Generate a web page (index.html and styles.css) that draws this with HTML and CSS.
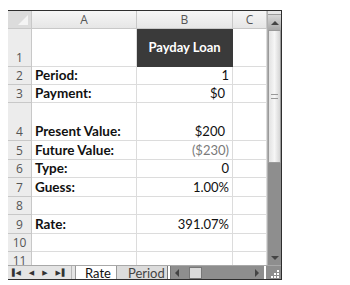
FILE: index.html
```html
<!DOCTYPE html>
<html>

<head>
    <title>Payday Loan - Rate</title>

    <link rel="stylesheet" href="styles.css">
</head>

<body>

    <div class="sheet">

        <div class="sheet-body">

            <div class="grid">
                <div class="hd corner"><span class="corner-tri"></span></div>
                <div class="hd col">A</div>
                <div class="hd col">B</div>
                <div class="hd col">C</div>

                <div class="hd row">1</div>
                <div class="cell"></div>
                <div class="cell title">Payday Loan</div>
                <div class="cell"></div>

                <div class="hd row">2</div>
                <div class="cell label">Period:</div>
                <div class="cell num">1</div>
                <div class="cell"></div>

                <div class="hd row">3</div>
                <div class="cell label">Payment:</div>
                <div class="cell num acct">$0</div>
                <div class="cell"></div>

                <div class="hd row">4</div>
                <div class="cell label">Present Value:</div>
                <div class="cell num acct">$200</div>
                <div class="cell"></div>

                <div class="hd row">5</div>
                <div class="cell label">Future Value:</div>
                <div class="cell num neg">($230)</div>
                <div class="cell"></div>

                <div class="hd row">6</div>
                <div class="cell label">Type:</div>
                <div class="cell num">0</div>
                <div class="cell"></div>

                <div class="hd row">7</div>
                <div class="cell label">Guess:</div>
                <div class="cell num">1.00%</div>
                <div class="cell"></div>

                <div class="hd row">8</div>
                <div class="cell"></div>
                <div class="cell"></div>
                <div class="cell"></div>

                <div class="hd row">9</div>
                <div class="cell label">Rate:</div>
                <div class="cell num">391.07%</div>
                <div class="cell"></div>

                <div class="hd row">10</div>
                <div class="cell"></div>
                <div class="cell"></div>
                <div class="cell"></div>

                <div class="hd row">11</div>
                <div class="cell"></div>
                <div class="cell"></div>
                <div class="cell"></div>
            </div>

            <div class="vscroll">
                <div class="vs-stub"></div>
                <div class="vs-btn"><span class="tri-up"></span></div>
                <div class="vs-thumb"><span class="grip"></span></div>
                <div class="vs-track"></div>
                <div class="vs-btn dark"><span class="tri-down"></span></div>
            </div>

        </div>

        <div class="tabbar">
            <div class="tab-nav">
                <span class="nav-btn">&#9612;&#9664;</span>
                <span class="nav-btn">&#9664;</span>
                <span class="nav-btn">&#9654;</span>
                <span class="nav-btn">&#9654;&#9616;</span>
            </div>
            <div class="tab active">Rate</div>
            <div class="tab">Period</div>
            <div class="splitter"></div>
            <div class="hscroll">
                <span class="tri-left"></span>
                <span class="hs-thumb"></span>
                <span class="hs-track"></span>
                <span class="tri-right"></span>
            </div>
            <div class="splitter light"></div>
            <div class="resize-grip">
                <svg width="14" height="14" viewBox="0 0 14 14">
                    <rect x="10" y="4" width="2" height="2" fill="#fff"/>
                    <rect x="7" y="7" width="2" height="2" fill="#fff"/>
                    <rect x="10" y="7" width="2" height="2" fill="#fff"/>
                    <rect x="4" y="10" width="2" height="2" fill="#fff"/>
                    <rect x="7" y="10" width="2" height="2" fill="#fff"/>
                    <rect x="10" y="10" width="2" height="2" fill="#fff"/>
                </svg>
            </div>
        </div>

    </div>

</body>

</html>
```

FILE: styles.css
```css
* {
    margin: 0;
    padding: 0;
    box-sizing: border-box;
}

body {
    background: #fff;
    font-family: Lato, "Open Sans", sans-serif;
    font-size: 13.5px;
    color: #111;
}

.sheet {
    width: 274px;
    margin: 10px 0 0 8px;
    border-top: 1px solid #2e2e2e;
    border-right: 1px solid #2e2e2e;
    border-bottom: 1px solid #2e2e2e;
}

.sheet-body {
    display: flex;
    height: 254px;
    overflow: hidden;
}

.grid {
    display: grid;
    grid-template-columns: 24px 105px 96px 34px;
    grid-template-rows: 18px 38px 18px 18px 38px 19px 18px 19px 18px 19px 18px 18px;
    width: 259px;
    overflow: hidden;
}

.hd {
    background: linear-gradient(#f6f6f6, #e6e6e6);
    color: #555;
    border-right: 1px solid #c8c8c8;
    border-bottom: 1px solid #c8c8c8;
    font-family: "Open Sans", sans-serif;
    font-size: 12px;
}

.hd.col {
    display: flex;
    align-items: center;
    justify-content: center;
}

.hd.row {
    display: flex;
    align-items: flex-end;
    justify-content: center;
    background: #ececec;
    line-height: 17px;
}

.corner {
    position: relative;
    background: #dcdcdc;
}

.corner-tri {
    position: absolute;
    right: 3px;
    bottom: 3px;
    width: 0;
    height: 0;
    border-left: 10px solid transparent;
    border-bottom: 10px solid #f4f4f4;
}

.cell {
    display: flex;
    align-items: flex-end;
    padding: 0 3px 0 3px;
    line-height: 17px;
    border-right: 1px solid #dcdcdc;
    border-bottom: 1px solid #dcdcdc;
    white-space: nowrap;
}

.label {
    font-weight: bold;
}

.num {
    justify-content: flex-end;
    padding-right: 3px;
    font-size: 13px;
}

.num.acct {
    padding-right: 7px;
}

.neg {
    color: #7a7a7a;
}

.title {
    background: #3a3a3a;
    color: #fff;
    font-weight: bold;
    font-size: 13px;
    align-items: center;
    justify-content: center;
    border-color: #3a3a3a;
}

.vscroll {
    width: 14px;
    display: flex;
    flex-direction: column;
    background: #8e8e8e;
    border-left: 1px solid #b0b0b0;
}

.vs-stub {
    height: 4px;
    background: #e8e8e8;
    border-bottom: 1px solid #9c9c9c;
}

.vs-btn {
    height: 15px;
    display: flex;
    align-items: center;
    justify-content: center;
    background: linear-gradient(#d8d8d8, #a8a8a8);
}

.vs-btn.dark {
    height: 14px;
    background: #8e8e8e;
}

.tri-up {
    border-left: 4px solid transparent;
    border-right: 4px solid transparent;
    border-bottom: 4px solid #444;
}

.tri-down {
    border-left: 4px solid transparent;
    border-right: 4px solid transparent;
    border-top: 4px solid #444;
}

.vs-thumb {
    height: 133px;
    display: flex;
    align-items: center;
    justify-content: center;
    background: linear-gradient(90deg, #e2e2e2, #f6f6f6 50%, #d6d6d6);
    border: 1px solid #9a9a9a;
}

.grip {
    width: 7px;
    height: 5px;
    border-top: 1px solid #999;
    border-bottom: 1px solid #999;
}

.vs-track {
    flex: 1;
}

.tabbar {
    display: flex;
    align-items: stretch;
    height: 14px;
    background: #e4e4e4;
    border-top: 1px solid #a8a8a8;
}

.tab-nav {
    display: flex;
    align-items: center;
    gap: 10px;
    width: 64px;
    padding-left: 4px;
    font-family: "DejaVu Sans", sans-serif;
    font-size: 7px;
    color: #333;
    border-right: 1px solid #b8b8b8;
}

.nav-btn {
    letter-spacing: -2px;
}

.tab {
    display: flex;
    align-items: center;
    padding: 0 2px 0 11px;
    font-size: 13px;
    line-height: 14px;
    color: #444;
    background: #dcdcdc;
}

.tab.active {
    margin-left: 3px;
    padding: 0 5px 0 9px;
    background: #fff;
    color: #111;
    border-left: 1px solid #999;
    border-right: 1px solid #999;
}

.splitter {
    width: 4px;
    background: #fff;
    border-left: 1px solid #777;
    border-right: 1px solid #777;
}

.splitter.light {
    border-color: #8e8e8e;
}

.hscroll {
    flex: 1;
    display: flex;
    align-items: center;
    background: #8e8e8e;
    padding: 0 4px;
}

.tri-left {
    border-top: 4px solid transparent;
    border-bottom: 4px solid transparent;
    border-right: 4px solid #444;
}

.hs-thumb {
    width: 13px;
    height: 12px;
    margin-left: 10px;
    background: #dadada;
    border: 1px solid #777;
}

.hs-track {
    flex: 1;
}

.tri-right {
    border-top: 4px solid transparent;
    border-bottom: 4px solid transparent;
    border-left: 4px solid #444;
}

.resize-grip {
    width: 14px;
    background: #8e8e8e;
}
```
